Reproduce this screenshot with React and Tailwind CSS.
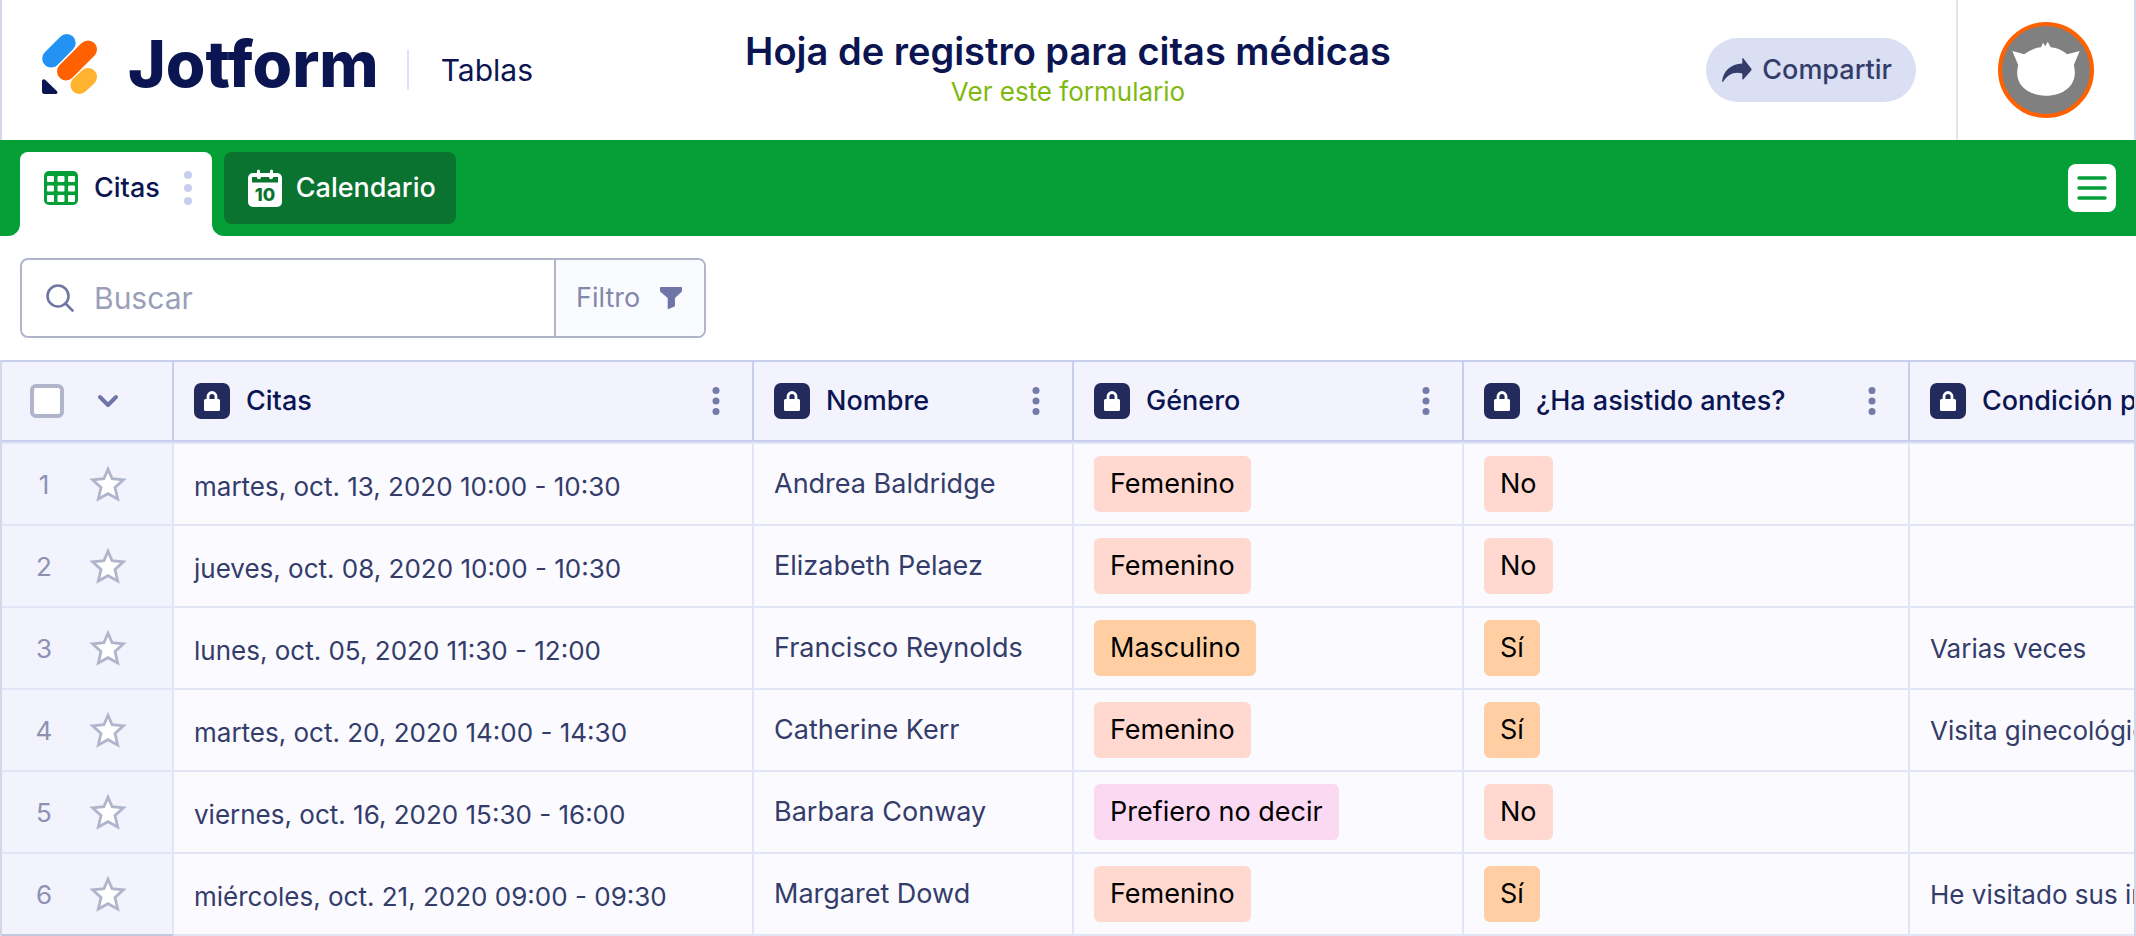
const columns = [
  { id: "citas", label: "Citas" },
  { id: "nombre", label: "Nombre" },
  { id: "genero", label: "Género" },
  { id: "asistido", label: "¿Ha asistido antes?" },
  { id: "condicion", label: "Condición previa", last: true },
];

const rows = [
  {
    date: "martes, oct. 13, 2020 10:00 - 10:30",
    name: "Andrea Baldridge",
    gender: "Femenino",
    attended: "No",
    condition: "",
  },
  {
    date: "jueves, oct. 08, 2020 10:00 - 10:30",
    name: "Elizabeth Pelaez",
    gender: "Femenino",
    attended: "No",
    condition: "",
  },
  {
    date: "lunes, oct. 05, 2020 11:30 - 12:00",
    name: "Francisco Reynolds",
    gender: "Masculino",
    attended: "Sí",
    condition: "Varias veces",
  },
  {
    date: "martes, oct. 20, 2020 14:00 - 14:30",
    name: "Catherine Kerr",
    gender: "Femenino",
    attended: "Sí",
    condition: "Visita ginecológica anual",
  },
  {
    date: "viernes, oct. 16, 2020 15:30 - 16:00",
    name: "Barbara Conway",
    gender: "Prefiero no decir",
    attended: "No",
    condition: "",
  },
  {
    date: "miércoles, oct. 21, 2020 09:00 - 09:30",
    name: "Margaret Dowd",
    gender: "Femenino",
    attended: "Sí",
    condition: "He visitado sus instalaciones",
  },
];

const tagColors = {
  Femenino: "bg-[#ffd8cf]",
  Masculino: "bg-[#ffcfa3]",
  "Prefiero no decir": "bg-[#fcd9f3]",
  No: "bg-[#ffd8cf]",
  Sí: "bg-[#ffcfa3]",
};

function LogoMark() {
  return (
    <svg width="56" height="60" viewBox="0 0 56 60" fill="none" strokeWidth="18" strokeLinecap="round" aria-hidden="true">
      <path d="M24.7 9 9.2 24.6" stroke="#2293f3" />
      <path d="M46 15.4 24 37.4" stroke="#ff6100" />
      <path d="M46 43 37.4 51" stroke="#ffb32e" />
      <path d="M0 47.5c0-2.2 2-3 3.4-1.6l11.4 11c1.3 1.3.6 3.1-1.2 3.1H2.4C1 60 0 59 0 57.6z" fill="#0a1551" />
    </svg>
  );
}

function ShareIcon() {
  return (
    <svg width="30" height="24" viewBox="0 0 30 24" fill="#343c6a" aria-hidden="true">
      <path d="M20.3.4c0-.5.6-.6.9-.2l8 10.4c.5.7.5 1.3 0 1.9l-8 8.9c-.4.4-.9.2-.9-.3v-5.7C12 13.5 6 16.2 1.3 23.5c-.4.7-1.3.5-1.2-.3C1.3 13 8.5 6.3 20.3 5.6z" />
    </svg>
  );
}

function Avatar() {
  return (
    <svg width="96" height="96" viewBox="0 0 96 96" aria-hidden="true">
      <circle cx="48" cy="48" r="46" fill="#808080" stroke="#ff6100" strokeWidth="4" />
      <path
        d="M43 25.3 45 20.7 47.3 24.3 49.7 19.7 52.7 25.3C59 25.9 65 28.5 69.3 32.3L81.7 29 75.8 43C78.5 54 75.5 61 70 66.2 64 71.5 56 73.7 48 73.7S32 71.5 26 66.2C20.5 61 17.5 54 20.2 43L14.3 29 26.3 32.3C31 28.5 37 25.9 43 25.3z"
        fill="#fff"
      />
    </svg>
  );
}

function GridIcon() {
  return (
    <svg width="34" height="34" viewBox="0 0 34 34" aria-hidden="true">
      <rect width="34" height="34" rx="5" fill="#049f37" />
      <g fill="#fff">
        <rect x="3" y="5" width="7" height="6" rx="1" />
        <rect x="13.5" y="5" width="7" height="6" rx="1" />
        <rect x="24" y="5" width="7" height="6" rx="1" />
        <rect x="3" y="14.5" width="7" height="6" rx="1" />
        <rect x="13.5" y="14.5" width="7" height="6" rx="1" />
        <rect x="24" y="14.5" width="7" height="6" rx="1" />
        <rect x="3" y="24" width="7" height="7" rx="1" />
        <rect x="13.5" y="24" width="7" height="7" rx="1" />
        <rect x="24" y="24" width="7" height="7" rx="1" />
      </g>
    </svg>
  );
}

function CalendarIcon() {
  return (
    <svg width="34" height="38" viewBox="0 0 34 38" aria-hidden="true">
      <rect y="4" width="34" height="34" rx="5" fill="#fff" />
      <path d="M4 8h5c0 3 4 3 4 0h8c0 3 4 3 4 0h5v5.5H4z" fill="#09732f" />
      <path d="M10.5 2v6M23.5 2v6" stroke="#fff" strokeWidth="3" strokeLinecap="round" />
      <text x="17" y="32" textAnchor="middle" fontSize="18" fontWeight="800" fontFamily="Inter, sans-serif" fill="#09732f">
        10
      </text>
    </svg>
  );
}

function DotsIcon({ className, size }) {
  const height = size === "lg" ? 34 : 28;
  const r = size === "lg" ? 4 : 3.5;
  return (
    <svg width="8" height={height} viewBox={`0 0 8 ${height}`} fill="currentColor" className={className} aria-hidden="true">
      <circle cx="4" cy={r} r={r} />
      <circle cx="4" cy={height / 2} r={r} />
      <circle cx="4" cy={height - r} r={r} />
    </svg>
  );
}

function LockIcon() {
  return (
    <svg width="36" height="36" viewBox="0 0 36 36" className="shrink-0" aria-hidden="true">
      <rect width="36" height="36" rx="7" fill="#232a5c" />
      <path d="M14 17v-3.5a4 4 0 0 1 8 0V17" fill="none" stroke="#fff" strokeWidth="2.8" />
      <rect x="10" y="16" width="16" height="12" rx="1.5" fill="#fff" />
    </svg>
  );
}

function StarIcon() {
  return (
    <svg width="38" height="36" viewBox="0 0 38 36" fill="#fff" stroke="#b1b5cc" strokeWidth="2.8" aria-hidden="true">
      <path d="M19 3.2 23.1 12.700 34.400 13.900 26 21.500 28.700 33 19 27.700 9.300 33 12 21.500 3.600 13.900 14.900 12.700z" />
    </svg>
  );
}

function Header() {
  return (
    <header className="grid h-[140px] grid-cols-[1fr_auto_1fr] border-x-2 border-[#d3d7ea]">
      <div className="flex items-center pl-10">
        <a href="#" className="flex items-center gap-[30px] pb-3">
          <LogoMark />
          <span className="text-[64px] leading-[64px] font-extrabold text-[#0a1551]">Jotform</span>
        </a>
        <span className="ml-7 h-10 w-0.5 bg-[#dfe3f5]" />
        <span className="ml-8 text-[30px] text-[#0a1551]">Tablas</span>
      </div>
      <div className="flex flex-col items-center justify-center text-center">
        <h1 className="text-[38px] leading-[44px] font-semibold text-[#0a1551]">
          Hoja de registro para citas médicas
        </h1>
        <a href="#" className="text-[26px] leading-[38px] text-[#7fb90f]">
          Ver este formulario
        </a>
      </div>
      <div className="flex items-center justify-end">
        <button className="mr-10 flex h-16 items-center gap-2.5 rounded-full bg-[#dbdff4] pr-6 pl-4 text-[27px] font-medium text-[#343c6a]">
          <ShareIcon />
          Compartir
        </button>
        <button className="flex h-full items-center border-l-2 border-[#e3e5f1] px-10" aria-label="Mi cuenta">
          <Avatar />
        </button>
      </div>
    </header>
  );
}

function TabBar() {
  return (
    <nav className="flex h-24 bg-white text-[27px] font-medium">
      <div className="w-5 rounded-br-xl bg-[#049f37]" />
      <div className="bg-[#049f37] pt-3">
        <button className="flex h-full items-center gap-4 rounded-t-lg bg-white pr-5 pb-3 pl-6 text-[#0a1551]">
          <GridIcon />
          Citas
          <DotsIcon size="lg" className="ml-2 text-[#c8ceed]" />
        </button>
      </div>
      <div className="flex flex-1 items-center justify-between rounded-bl-xl bg-[#049f37] pr-5 pl-3">
        <button className="flex h-[72px] items-center gap-3.5 rounded-lg bg-[#09732f] pr-5 pl-6 text-white">
          <CalendarIcon />
          Calendario
        </button>
        <button className="flex size-12 items-center justify-center rounded-lg bg-white" aria-label="Menú">
          <svg width="30" height="24" viewBox="0 0 30 24" stroke="#049f37" strokeWidth="3.5" strokeLinecap="round" aria-hidden="true">
            <path d="M2 2h26M2 12h26M2 22h26" />
          </svg>
        </button>
      </div>
    </nav>
  );
}

function Toolbar() {
  return (
    <div className="flex px-5 py-[22px]">
      <div className="flex h-20 overflow-hidden rounded-lg border-2 border-[#b1b5cc]">
        <label className="flex w-[532px] items-center gap-5 pl-6">
          <svg width="28" height="28" viewBox="0 0 28 28" fill="none" stroke="#6f76a7" strokeWidth="2.6" strokeLinecap="round" className="shrink-0" aria-hidden="true">
            <circle cx="12" cy="12" r="10.5" />
            <path d="m19.5 19.5 7 7" />
          </svg>
          <input
            type="search"
            aria-label="Buscar"
            placeholder="Buscar"
            className="w-full text-[30px] outline-none placeholder:text-[#9a9fb9]"
          />
        </label>
        <button className="flex items-center gap-5 border-l-2 border-[#b1b5cc] bg-[#fafbff] pr-[22px] pl-5 text-[27px] text-[#8388ab]">
          Filtro
          <svg width="22" height="22" viewBox="0 0 22 22" fill="#6f76a7" aria-hidden="true">
            <path d="M1 0h20c.6 0 1 .4 1 1v2.5c0 .5-.2 1-.6 1.4L15 11v7.5c0 .4-.2.7-.5.9L8.6 22c-.5.2-.9 0-.9-.5V11L.6 4.9C.2 4.5 0 4 0 3.5V1c0-.6.4-1 1-1z" />
          </svg>
        </button>
      </div>
    </div>
  );
}

function Tag({ children }) {
  return (
    <span className={`inline-flex h-14 items-center rounded-md px-4 text-black ${tagColors[children]}`}>
      {children}
    </span>
  );
}

function DataTable() {
  const cell = "border-r-2 border-b-2 border-[#e1e5f5] px-5";

  return (
    <div className="overflow-hidden border-x-2 border-[#d3d7ea]">
      <table className="w-full table-fixed border-separate border-spacing-0 text-left text-[27px] whitespace-nowrap text-[#343c6a]">
        <colgroup>
          <col className="w-[172px]" />
          <col className="w-[580px]" />
          <col className="w-[320px]" />
          <col className="w-[390px]" />
          <col className="w-[446px]" />
          <col />
        </colgroup>
        <thead className="bg-[#f3f3fe] text-[#0a1551]">
          <tr className="h-[82px]">
            <th className="border-y-2 border-r-2 border-[#c8ceed] pl-7">
              <div className="flex items-center gap-8">
                <input
                  type="checkbox"
                  aria-label="Seleccionar todo"
                  className="size-[34px] appearance-none rounded-md border-4 border-[#b1b5cc] bg-white"
                />
                <button aria-label="Opciones de selección">
                  <svg width="24" height="16" viewBox="0 0 24 16" fill="none" stroke="#6f76a7" strokeWidth="4" strokeLinecap="round" strokeLinejoin="round" aria-hidden="true">
                    <path d="m4 4 8 8 8-8" />
                  </svg>
                </button>
              </div>
            </th>
            {columns.map((column) => (
              <th
                key={column.id}
                className={`overflow-hidden border-y-2 border-[#c8ceed] pl-5 font-medium ${column.last ? "" : "border-r-2 pr-8"}`}
              >
                <div className="flex items-center gap-4">
                  <LockIcon />
                  {column.label}
                  {!column.last && (
                    <button className="ml-auto" aria-label={`Opciones de ${column.label}`}>
                      <DotsIcon className="text-[#757ba8]" />
                    </button>
                  )}
                </div>
              </th>
            ))}
          </tr>
        </thead>
        <tbody className="bg-[#fafaff]">
          {rows.map((row, index) => (
            <tr key={row.date} className="group h-[82px] first:h-[84px] first:[&>td]:border-t-2">
              <td className="border-r-2 border-b-2 border-[#e1e5f5] bg-[#f3f3fe] group-last:border-b-[#c3c8dc]">
                <div className="flex items-center pl-6">
                  <span className="w-9 text-center text-[26px] text-[#8d92b2]">{index + 1}</span>
                  <button className="ml-[27px]" aria-label="Marcar como favorito">
                    <StarIcon />
                  </button>
                </div>
              </td>
              <td className={`${cell} pt-1 text-[26px]`}>{row.date}</td>
              <td className={cell}>{row.name}</td>
              <td className={cell}>
                <Tag>{row.gender}</Tag>
              </td>
              <td className={cell}>
                <Tag>{row.attended}</Tag>
              </td>
              <td className="overflow-hidden border-b-2 border-[#e1e5f5] pl-5 text-[26px]">{row.condition}</td>
            </tr>
          ))}
        </tbody>
      </table>
    </div>
  );
}

export default function App() {
  return (
    <main className="bg-white font-['Inter',sans-serif]">
      <Header />
      <TabBar />
      <Toolbar />
      <DataTable />
    </main>
  );
}
